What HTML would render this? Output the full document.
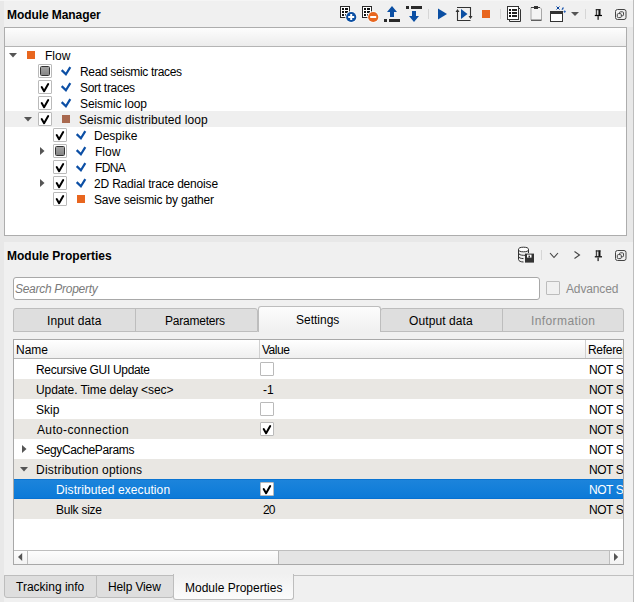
<!DOCTYPE html>
<html><head><meta charset="utf-8">
<style>
*{box-sizing:border-box;margin:0;padding:0}
html,body{width:634px;height:602px;overflow:hidden}
body{position:relative;background:#f0f0f0;font-family:"Liberation Sans",sans-serif;font-size:12px;color:#000}
.a{position:absolute}
.t{position:absolute;white-space:nowrap;line-height:16px;height:16px}
.b{font-weight:bold}
.cb{position:absolute;width:14px;height:14px;border:1px solid #bababa;border-radius:1px;background:#fff}
.cbp::after{content:"";box-sizing:border-box;position:absolute;left:1px;top:1px;width:10px;height:10px;border:1px solid #333;border-radius:1.5px;background:linear-gradient(#a2a2a2,#858585)}
svg{position:absolute;overflow:visible}
</style></head><body>
<div class="a" style="left:0px;top:0px;width:4px;height:602px;background:#e8e8e8"></div>
<div class="a" style="left:0px;top:0px;width:634px;height:1px;background:#f5f5f5"></div>
<div class="a" style="left:627px;top:27px;width:6px;height:215px;background:#e8e8e8"></div>
<div class="a" style="left:4px;top:236px;width:629px;height:6px;background:#e8e8e8"></div>
<div class="a" style="left:633px;top:0px;width:1px;height:602px;background:#bdbdbd"></div>
<!-- toolbar icons -->
<svg style="left:0;top:0" width="634" height="28">
<g>
<rect x="340.5" y="6.5" width="9" height="11" fill="#fff" stroke="#2a2a2a" stroke-width="1"/>
<rect x="342" y="8" width="2" height="2" fill="#111"/><rect x="345" y="8" width="3" height="2" fill="#111"/>
<rect x="342" y="11" width="2" height="2" fill="#111"/><rect x="345" y="11" width="3" height="2" fill="#111"/>
<rect x="342" y="14" width="2" height="2" fill="#111"/><rect x="345" y="14" width="3" height="2" fill="#111"/>
</g>
<circle cx="351.2" cy="17" r="6" fill="#f8f8f8"/>
<circle cx="351.2" cy="17" r="5.1" fill="#0b4fa3"/>
<rect x="348.2" y="16" width="6" height="2" fill="#fff"/><rect x="350.2" y="14" width="2" height="6" fill="#fff"/>
<g transform="translate(22 0)">
<rect x="340.5" y="6.5" width="9" height="11" fill="#fff" stroke="#2a2a2a" stroke-width="1"/>
<rect x="342" y="8" width="2" height="2" fill="#111"/><rect x="345" y="8" width="3" height="2" fill="#111"/>
<rect x="342" y="11" width="2" height="2" fill="#111"/><rect x="345" y="11" width="3" height="2" fill="#111"/>
<rect x="342" y="14" width="2" height="2" fill="#111"/><rect x="345" y="14" width="3" height="2" fill="#111"/>
</g>
<circle cx="373.2" cy="17" r="6" fill="#f8f8f8"/>
<circle cx="373.2" cy="17" r="5.1" fill="#e8661f"/>
<rect x="370.2" y="16" width="6" height="2" fill="#fff"/>
<!-- up arrow -->
<path d="M387 12L392 6L397 12H394V17H390V12Z" fill="#0b4fa3"/>
<rect x="384" y="19" width="3" height="3" fill="#2a2a2a"/><rect x="389" y="19" width="11" height="3" fill="#2a2a2a"/>
<!-- down arrow -->
<rect x="406" y="6" width="3" height="3" fill="#2a2a2a"/><rect x="411" y="6" width="11" height="3" fill="#2a2a2a"/>
<path d="M412 11H416V16H419L414 22L409 16H412Z" fill="#0b4fa3"/>
<rect x="428" y="9" width="1" height="10" fill="#d6d6d6"/>
<!-- play -->
<path d="M438 8.5L447 14L438 19.5Z" fill="#0b4fa3"/>
<!-- loop play -->
<path d="M457 7.5H470.5V17.5M457.5 10V20.5H470.5" fill="none" stroke="#333" stroke-width="1.1"/>
<path d="M455.5 12L457.5 9L459.5 12Z M468.5 16L470.5 19L472.5 16Z" fill="#333"/>
<path d="M461 9L467.5 14L461 19Z" fill="#0b4fa3"/>
<!-- stop -->
<rect x="482" y="10" width="8" height="8" fill="#e8661f"/>
<rect x="500" y="9" width="1" height="10" fill="#d6d6d6"/>
<!-- copy doc -->
<path d="M509.5 19.5V21.5H520.5V9.5L518.5 7.5" fill="none" stroke="#333" stroke-width="1"/>
<rect x="507.5" y="6.5" width="11" height="13" fill="#fff" stroke="#333" stroke-width="1"/>
<rect x="509" y="9" width="2" height="2" fill="#111"/><rect x="512" y="9" width="5" height="2" fill="#222"/>
<rect x="509" y="12" width="2" height="2" fill="#111"/><rect x="512" y="12" width="5" height="2" fill="#222"/>
<rect x="509" y="15" width="2" height="2" fill="#111"/><rect x="512" y="15" width="5" height="2" fill="#222"/>
<!-- clipboard -->
<path d="M531 7.5V20H541.5V9L540 7.5Z" fill="#f4f4f4" stroke="#a8a8a8" stroke-width="1"/>
<path d="M531 7.5H540M531 20.3H541.5" stroke="#444" stroke-width="1"/>
<rect x="534" y="6" width="4" height="3" fill="#333"/>
<!-- window sparkle -->
<rect x="550.5" y="11.5" width="12" height="10" fill="#fff" stroke="#333" stroke-width="1"/>
<path d="M550 11H562L563 12V14H550Z" fill="#333"/>
<path d="M556.3 6.3L559.7 9.7M559.7 6.3L556.3 9.7" stroke="#3f75c2" stroke-width="1"/>
<rect x="557" y="7" width="2" height="2" fill="#073f97"/>
<path d="M561.5 9.8L562.5 7.6L564 7.6L563 9.8Z" fill="#1a55ad"/>
<path d="M564.7 10.3L566 11.6L564.7 12.9L563.4 11.6Z" fill="#2a63b8"/>
<path d="M571 12H579L575 16Z" fill="#555"/>
<rect x="585" y="9" width="1" height="10" fill="#d6d6d6"/>
<!-- pin -->
<rect x="595.8" y="9.1" width="4.7" height="6" fill="#fff"/>
<rect x="595.8" y="9.1" width="1.4" height="6" fill="#444"/>
<rect x="598.4" y="9.1" width="2.1" height="6" fill="#111"/>
<rect x="595.8" y="9.1" width="4.7" height="1.1" fill="#222"/>
<rect x="594.8" y="14.9" width="7.2" height="1.2" fill="#000"/>
<rect x="597.3" y="16" width="1.7" height="3.8" fill="#555"/>
<!-- float -->
<rect x="615.5" y="9.5" width="10.5" height="10" rx="2" fill="none" stroke="#444" stroke-width="1"/>
<rect x="619.5" y="11.8" width="4" height="4" rx="1" fill="none" stroke="#444" stroke-width="1"/>
<rect x="617.3" y="13.6" width="4" height="4" rx="1" fill="#f0f0f0" stroke="#444" stroke-width="1"/>
</svg>
<!-- module properties header icons -->
<svg style="left:0;top:243px" width="634" height="25">
<ellipse cx="523.5" cy="6.5" rx="5" ry="2.3" fill="#fff" stroke="#333" stroke-width="1"/>
<path d="M518.5 6.5V16.5C518.5 18 521 19 523.5 19M518.5 10C518.5 11.5 521 12.3 523.5 12.3H527M518.5 13.3C518.5 14.8 521 15.6 523.5 15.6M528.5 6.5V10" fill="none" stroke="#333" stroke-width="1"/>
<rect x="525" y="10.6" width="9" height="9" fill="#333"/>
<rect x="527" y="11.6" width="4.5" height="3" fill="#fff"/><rect x="528.5" y="12.6" width="1.5" height="2" fill="#333"/>
<rect x="541" y="7" width="1" height="10" fill="#d6d6d6"/>
<path d="M550 10L554 14.5L558 10" fill="none" stroke="#444" stroke-width="1.1"/>
<path d="M574.5 8.5L579.5 12L574.5 15.5" fill="none" stroke="#444" stroke-width="1.1"/>
<rect x="595.8" y="7.4" width="4.7" height="6" fill="#fff"/>
<rect x="595.8" y="7.4" width="1.4" height="6" fill="#444"/>
<rect x="598.4" y="7.4" width="2.1" height="6" fill="#111"/>
<rect x="595.8" y="7.4" width="4.7" height="1.1" fill="#222"/>
<rect x="594.8" y="13.2" width="7.2" height="1.2" fill="#000"/>
<rect x="597.3" y="14.3" width="1.7" height="3.8" fill="#555"/>
<rect x="615.5" y="7.5" width="10.5" height="10" rx="2" fill="none" stroke="#444" stroke-width="1"/>
<rect x="619.5" y="9.8" width="4" height="4" rx="1" fill="none" stroke="#444" stroke-width="1"/>
<rect x="617.3" y="11.6" width="4" height="4" rx="1" fill="#f0f0f0" stroke="#444" stroke-width="1"/>
</svg>


<div class="t b" id="mm" style="left:7.00px;top:7px;letter-spacing:-0.077px;">Module Manager</div>
<div class="a" style="left:4px;top:27px;width:623px;height:209px;border:1px solid #adadad;background:#fff"></div>
<div class="a" style="left:5px;top:28px;width:621px;height:19px;background:linear-gradient(#fdfdfd,#ececec);border-bottom:1px solid #b4b4b4"></div>
<div class="a" style="left:5px;top:111px;width:621px;height:16px;background:#efefef"></div>
<svg style="left:9px;top:53px" width="8" height="5"><path d="M0 0H8L4 4.5Z" fill="#555"/></svg>
<div class="a" style="left:27px;top:51px;width:8px;height:8px;background:#e8661f"></div>
<div class="t " id="tr0" style="left:45.00px;top:48px;">Flow</div>
<div class="cb cbp" style="left:38px;top:64px;"></div>
<svg style="left:61px;top:66px" width="11" height="10"><path d="M0.7 4.1L4.9 8.3L9.3 1.2" fill="none" stroke="#0c4fa5" stroke-width="2.2" stroke-linejoin="miter"/></svg>
<div class="t " id="tr1" style="left:80.00px;top:64px;letter-spacing:-0.333px;">Read seismic traces</div>
<div class="cb" style="left:38px;top:80px;"><svg style="left:-1px;top:-1px" width="14" height="14"><path d="M3.7 7.0L6.1 11.2L10.2 4.0" fill="none" stroke="#000" stroke-width="2.0" stroke-linecap="round" stroke-linejoin="round"/></svg></div>
<svg style="left:61px;top:82px" width="11" height="10"><path d="M0.7 4.1L4.9 8.3L9.3 1.2" fill="none" stroke="#0c4fa5" stroke-width="2.2" stroke-linejoin="miter"/></svg>
<div class="t " id="tr2" style="left:80.00px;top:80px;letter-spacing:-0.300px;">Sort traces</div>
<div class="cb" style="left:38px;top:96px;"><svg style="left:-1px;top:-1px" width="14" height="14"><path d="M3.7 7.0L6.1 11.2L10.2 4.0" fill="none" stroke="#000" stroke-width="2.0" stroke-linecap="round" stroke-linejoin="round"/></svg></div>
<svg style="left:61px;top:98px" width="11" height="10"><path d="M0.7 4.1L4.9 8.3L9.3 1.2" fill="none" stroke="#0c4fa5" stroke-width="2.2" stroke-linejoin="miter"/></svg>
<div class="t " id="tr3" style="left:80.00px;top:96px;letter-spacing:-0.091px;">Seismic loop</div>
<svg style="left:24px;top:117px" width="8" height="5"><path d="M0 0H8L4 4.5Z" fill="#555"/></svg>
<div class="cb" style="left:38px;top:112px;"><svg style="left:-1px;top:-1px" width="14" height="14"><path d="M3.7 7.0L6.1 11.2L10.2 4.0" fill="none" stroke="#000" stroke-width="2.0" stroke-linecap="round" stroke-linejoin="round"/></svg></div>
<div class="a" style="left:62px;top:115px;width:8px;height:8px;background:#a9694f"></div>
<div class="t " id="tr4" style="left:79.00px;top:112px;letter-spacing:0.087px;">Seismic distributed loop</div>
<div class="cb" style="left:53px;top:128px;"><svg style="left:-1px;top:-1px" width="14" height="14"><path d="M3.7 7.0L6.1 11.2L10.2 4.0" fill="none" stroke="#000" stroke-width="2.0" stroke-linecap="round" stroke-linejoin="round"/></svg></div>
<svg style="left:76px;top:130px" width="11" height="10"><path d="M0.7 4.1L4.9 8.3L9.3 1.2" fill="none" stroke="#0c4fa5" stroke-width="2.2" stroke-linejoin="miter"/></svg>
<div class="t " id="tr5" style="left:94.00px;top:128px;">Despike</div>
<svg style="left:40px;top:147px" width="5" height="8"><path d="M0 0V8L4.5 4Z" fill="#555"/></svg>
<div class="cb cbp" style="left:53px;top:144px;"></div>
<svg style="left:76px;top:146px" width="11" height="10"><path d="M0.7 4.1L4.9 8.3L9.3 1.2" fill="none" stroke="#0c4fa5" stroke-width="2.2" stroke-linejoin="miter"/></svg>
<div class="t " id="tr6" style="left:95.00px;top:144px;">Flow</div>
<div class="cb" style="left:53px;top:160px;"><svg style="left:-1px;top:-1px" width="14" height="14"><path d="M3.7 7.0L6.1 11.2L10.2 4.0" fill="none" stroke="#000" stroke-width="2.0" stroke-linecap="round" stroke-linejoin="round"/></svg></div>
<svg style="left:76px;top:162px" width="11" height="10"><path d="M0.7 4.1L4.9 8.3L9.3 1.2" fill="none" stroke="#0c4fa5" stroke-width="2.2" stroke-linejoin="miter"/></svg>
<div class="t " id="tr7" style="left:95.00px;top:160px;letter-spacing:-0.667px;">FDNA</div>
<svg style="left:40px;top:179px" width="5" height="8"><path d="M0 0V8L4.5 4Z" fill="#555"/></svg>
<div class="cb" style="left:53px;top:176px;"><svg style="left:-1px;top:-1px" width="14" height="14"><path d="M3.7 7.0L6.1 11.2L10.2 4.0" fill="none" stroke="#000" stroke-width="2.0" stroke-linecap="round" stroke-linejoin="round"/></svg></div>
<svg style="left:76px;top:178px" width="11" height="10"><path d="M0.7 4.1L4.9 8.3L9.3 1.2" fill="none" stroke="#0c4fa5" stroke-width="2.2" stroke-linejoin="miter"/></svg>
<div class="t " id="tr8" style="left:94.00px;top:176px;letter-spacing:-0.182px;">2D Radial trace denoise</div>
<div class="cb" style="left:53px;top:192px;"><svg style="left:-1px;top:-1px" width="14" height="14"><path d="M3.7 7.0L6.1 11.2L10.2 4.0" fill="none" stroke="#000" stroke-width="2.0" stroke-linecap="round" stroke-linejoin="round"/></svg></div>
<div class="a" style="left:77px;top:195px;width:8px;height:8px;background:#e8661f"></div>
<div class="t " id="tr9" style="left:94.00px;top:192px;letter-spacing:-0.190px;">Save seismic by gather</div>
<div class="t b" id="mp" style="left:7.00px;top:248px;">Module Properties</div>
<div class="a" style="left:13px;top:277px;width:527px;height:23px;border:1px solid #a8a8a8;border-radius:3px;background:#fff"></div>
<div class="t " id="sp" style="left:15.00px;top:281px;letter-spacing:-0.286px;font-style:italic;color:#7a7a7a">Search Property</div>
<div class="a" style="left:546px;top:281px;width:14px;height:14px;border:1px solid #bcbcbc;border-radius:1px;background:#f0f0f0"></div>
<div class="t " id="adv" style="left:566.00px;top:281px;letter-spacing:-0.143px;color:#8a8a8a">Advanced</div>
<div class="a" style="left:13px;top:308px;width:245px;height:24px;border:1px solid #bdbdbd;border-radius:3px 3px 0 0;background:#dedede"></div>
<div class="a" style="left:135px;top:308px;width:1px;height:24px;background:#bdbdbd"></div>
<div class="a" style="left:380px;top:308px;width:244px;height:24px;border:1px solid #bdbdbd;border-radius:3px 3px 0 0;background:#dedede"></div>
<div class="a" style="left:502px;top:308px;width:1px;height:24px;background:#bdbdbd"></div>
<div class="a" style="left:258px;top:306px;width:123px;height:26px;border:1px solid #bdbdbd;border-bottom:none;border-radius:3px 3px 0 0;background:linear-gradient(#fcfcfc,#f0f0f0)"></div>
<div class="t " id="tab1" style="left:47.00px;top:313px;letter-spacing:0.111px;">Input data</div>
<div class="t " id="tab2" style="left:165.00px;top:313px;letter-spacing:-0.222px;">Parameters</div>
<div class="t " id="tab3" style="left:296.00px;top:312px;">Settings</div>
<div class="t " id="tab4" style="left:409.00px;top:313px;letter-spacing:0.100px;">Output data</div>
<div class="t " id="tab5" style="left:531.00px;top:313px;letter-spacing:0.400px;color:#8a8a8a">Information</div>
<div class="a" style="left:13px;top:339px;width:611px;height:226px;border:1px solid #a8a8a8;background:#fff"></div>
<div class="a" style="left:14px;top:340px;width:609px;height:19px;background:linear-gradient(#ffffff,#efefef);border-bottom:1px solid #b4b4b4"></div>
<div class="a" style="left:259px;top:340px;width:1px;height:18px;background:#d0d0d0"></div>
<div class="a" style="left:585px;top:340px;width:1px;height:18px;background:#d0d0d0"></div>
<div class="t " id="h1" style="left:16.00px;top:342px;">Name</div>
<div class="t " id="h2" style="left:262.00px;top:342px;letter-spacing:-0.500px;">Value</div>
<div class="t " id="h3" style="left:588.00px;top:342px;letter-spacing:-0.300px;width:35px;overflow:hidden;">Reference</div>
<div class="t " id="tt0" style="left:36.00px;top:362px;letter-spacing:-0.316px;color:#000">Recursive GUI Update</div>
<div class="cb" style="left:260px;top:362px;"></div>
<div class="t " id="tn0" style="left:589.00px;top:362px;letter-spacing:-0.450px;width:34px;overflow:hidden;color:#000">NOT SET</div>
<div class="a" style="left:14px;top:379px;width:609px;height:20px;background:#e9e7e3"></div>
<div class="t " id="tt1" style="left:36.00px;top:382px;letter-spacing:-0.087px;color:#000">Update. Time delay &lt;sec&gt;</div>
<div class="t " id="tv1" style="left:263.00px;top:382px;color:#000">-1</div>
<div class="t " id="tn1" style="left:589.00px;top:382px;letter-spacing:-0.450px;width:34px;overflow:hidden;color:#000">NOT SET</div>
<div class="t " id="tt2" style="left:36.00px;top:402px;color:#000">Skip</div>
<div class="cb" style="left:260px;top:402px;"></div>
<div class="t " id="tn2" style="left:589.00px;top:402px;letter-spacing:-0.450px;width:34px;overflow:hidden;color:#000">NOT SET</div>
<div class="a" style="left:14px;top:419px;width:609px;height:20px;background:#e9e7e3"></div>
<div class="t " id="tt3" style="left:37.00px;top:422px;letter-spacing:0.357px;color:#000">Auto-connection</div>
<div class="cb" style="left:260px;top:422px;"><svg style="left:-1px;top:-1px" width="14" height="14"><path d="M3.7 7.0L6.1 11.2L10.2 4.0" fill="none" stroke="#000" stroke-width="2.0" stroke-linecap="round" stroke-linejoin="round"/></svg></div>
<div class="t " id="tn3" style="left:589.00px;top:422px;letter-spacing:-0.450px;width:34px;overflow:hidden;color:#000">NOT SET</div>
<svg style="left:22px;top:445px" width="5" height="8"><path d="M0 0V8L4.5 4Z" fill="#555"/></svg>
<div class="t " id="tt4" style="left:36.00px;top:442px;letter-spacing:-0.357px;color:#000">SegyCacheParams</div>
<div class="t " id="tn4" style="left:589.00px;top:442px;letter-spacing:-0.450px;width:34px;overflow:hidden;color:#000">NOT SET</div>
<div class="a" style="left:14px;top:459px;width:609px;height:20px;background:#e9e7e3"></div>
<svg style="left:20px;top:467px" width="8" height="5"><path d="M0 0H8L4 4.5Z" fill="#555"/></svg>
<div class="t " id="tt5" style="left:36.00px;top:462px;letter-spacing:0.211px;color:#000">Distribution options</div>
<div class="t " id="tn5" style="left:589.00px;top:462px;letter-spacing:-0.450px;width:34px;overflow:hidden;color:#000">NOT SET</div>
<div class="a" style="left:14px;top:479px;width:609px;height:20px;background:linear-gradient(#0a74d2 0,#0a74d2 1px,#1c84db 1px,#0c7ad8 19px,#0771d1 19px)"></div>
<div class="t " id="tt6" style="left:56.00px;top:482px;letter-spacing:0.100px;color:#fff">Distributed execution</div>
<div class="cb" style="left:260px;top:482px;"><svg style="left:-1px;top:-1px" width="14" height="14"><path d="M3.7 7.0L6.1 11.2L10.2 4.0" fill="none" stroke="#000" stroke-width="2.0" stroke-linecap="round" stroke-linejoin="round"/></svg></div>
<div class="t " id="tn6" style="left:589.00px;top:482px;letter-spacing:-0.450px;width:34px;overflow:hidden;color:#fff">NOT SET</div>
<div class="a" style="left:14px;top:499px;width:609px;height:20px;background:#e9e7e3"></div>
<div class="t " id="tt7" style="left:56.00px;top:502px;letter-spacing:-0.250px;color:#000">Bulk size</div>
<div class="t " id="tv7" style="left:263.00px;top:502px;letter-spacing:-1.000px;color:#000">20</div>
<div class="t " id="tn7" style="left:589.00px;top:502px;letter-spacing:-0.450px;width:34px;overflow:hidden;color:#000">NOT SET</div>
<div class="a" style="left:14px;top:550px;width:609px;height:14px;background:#e4e4e4;border-top:1px solid #bebebe"></div>
<div class="a" style="left:14px;top:551px;width:14px;height:13px;background:linear-gradient(#fdfdfd,#f3f3f3);border-right:1px solid #bebebe"></div>
<svg style="left:18px;top:553px" width="5" height="8"><path d="M4.2 0V8L0 4Z" fill="#555"/></svg>
<div class="a" style="left:28px;top:551px;width:251px;height:13px;background:linear-gradient(#fdfdfd,#f2f2f2);border-right:1px solid #b8b8b8"></div>
<div class="a" style="left:609px;top:551px;width:14px;height:13px;background:linear-gradient(#fdfdfd,#f3f3f3);border-left:1px solid #bebebe"></div>
<svg style="left:614px;top:553px" width="5" height="8"><path d="M0 0V8L4.2 4Z" fill="#555"/></svg>
<div class="a" style="left:4px;top:575px;width:629px;height:1px;background:#c0c0c0"></div>
<div class="a" style="left:4px;top:575px;width:93px;height:23px;border:1px solid #bdbdbd;border-radius:0 0 3px 3px;background:#dedede"></div>
<div class="a" style="left:96px;top:575px;width:78px;height:23px;border:1px solid #bdbdbd;border-radius:0 0 3px 3px;background:#dedede"></div>
<div class="a" style="left:173px;top:574px;width:121px;height:26px;border:1px solid #bdbdbd;border-top:none;border-radius:0 0 3px 3px;background:linear-gradient(#f0f0f0,#fcfcfc)"></div>
<div class="t " id="bt1" style="left:16.00px;top:579px;">Tracking info</div>
<div class="t " id="bt2" style="left:108.00px;top:579px;letter-spacing:-0.125px;">Help View</div>
<div class="t " id="bt3" style="left:185.00px;top:580px;">Module Properties</div>
</body></html>
